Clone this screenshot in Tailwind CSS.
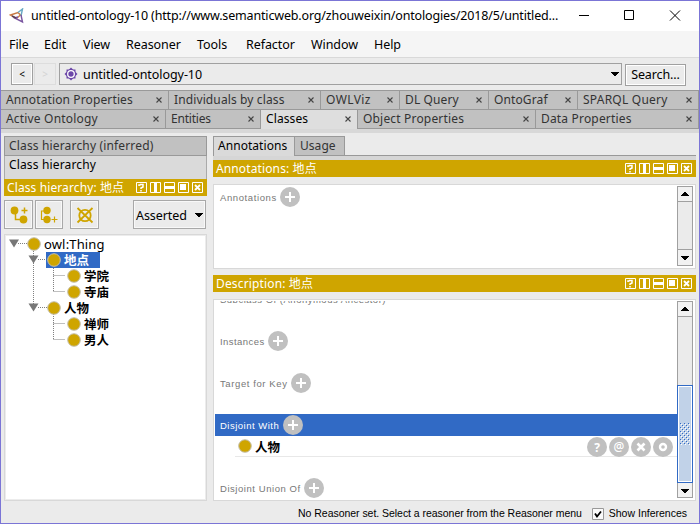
<!DOCTYPE html>
<html lang="zh">
<head>
<meta charset="utf-8">
<title>untitled-ontology-10</title>
<script src="https://cdn.jsdelivr.net/npm/@tailwindcss/browser@4"></script>
</head>
<body class="w-[700px] h-[524px] overflow-hidden font-['Noto_Sans','Noto_Sans_CJK_SC',sans-serif] text-[12px] leading-none text-black">
<svg class="hidden">
  <symbol id="panel" viewBox="0 0 67 11">
    <g fill="none" stroke="#fff" stroke-width="1"><path d="M.5 .5h10v10h-10zM14.500 .5h10v10h-10zM28.500 .5h10v10h-10zM42.500 .5h10v10h-10zM56.500 .5h10v10h-10z"/></g>
    <path d="M18 1h3v9h-3zM29 4h9v3h-9zM44 2h6v6h-6z" fill="#fff"/>
    <path d="M3 4V3h1.500M4 2.500h3V5L5 6v1M5 8v1.500" fill="none" stroke="#fff" stroke-width="1.500"/>
    <path d="M59 3l5 5M64 3l-5 5" stroke="#fff" stroke-width="1.800"/>
  </symbol>
  <symbol id="plus" viewBox="0 0 20 20"><circle cx="10" cy="10" r="10" fill="#c0c0c0"/><path d="M10 5v10M5 10h10" stroke="#fff" stroke-width="2"/></symbol>
  <symbol id="dot" viewBox="0 0 14 14"><circle cx="7" cy="7" r="6.300" fill="#cfa500" stroke="#c4bfae"/></symbol>
  <symbol id="up" viewBox="0 0 8 4"><path d="M0 4V3h1V2h1V1h1V0h2v1h1v1h1v1h1v1z"/></symbol>
  <symbol id="down" viewBox="0 0 8 4"><path d="M0 0v1h1v1h1v1h1v1h2V3h1V2h1V1h1V0z"/></symbol>
  <symbol id="x" viewBox="0 0 6 6"><path d="M.5 .5l5 5M5.500 .5l-5 5" stroke="#444" stroke-width="1.100"/></symbol>
</svg>
<div class="w-[700px] h-[524px] border border-[#7b75d6] bg-[#ebebeb] flex flex-col">
  <header class="h-[30px] bg-white flex items-center shrink-0">
    <svg class="w-[16px] h-[16px] ml-[8px] mr-[6px]" viewBox="0 0 16 16" fill="none" stroke-width="1.400"><path d="M1.500 7L9 4.500L11.500 7L7.500 10.500z" stroke="#c77a45"/><path d="M9 4.500L13.500 1L12 8" stroke="#68a9c4"/><path d="M12 7L13.500 14L5.500 10L9 9" stroke="#7955a0"/><path d="M3 8l4 2" stroke="#5a4058"/></svg>
    <div class="w-[529px] text-[12.500px] whitespace-nowrap tracking-[-0.160px]">untitled-ontology-10 (http://www.semanticweb.org/zhouweixin/ontologies/2018/5/untitled...</div>
    <svg class="w-[102px] h-[12px] ml-[19px]" viewBox="0 0 102 12" fill="none" stroke="#000"><path d="M0 5.500h10M45.500 .5h9v9h-9zM91 .5l10 10M101 .5l-10 10"/></svg>
  </header>
  <nav class="h-[27px] bg-[#f5f5f5] border-b border-[#d9d9d9] flex items-center shrink-0 pl-[8px] pt-[2px] text-[12.500px] tracking-[-0.070px]">
    <span class="w-[35px]">File</span><span class="w-[39px]">Edit</span><span class="w-[43px]">View</span><span class="w-[71px]">Reasoner</span><span class="w-[49px]">Tools</span><span class="w-[65px]">Refactor</span><span class="w-[63px]">Window</span><span>Help</span>
  </nav>
  <div class="h-[32px] shrink-0 flex items-start pl-[10px] pt-[5px]">
    <button class="w-[22px] h-[22px] border border-[#a0a0a0] outline outline-white -outline-offset-2 text-[10px]">&lt;</button>
    <button class="w-[22px] h-[22px] border border-[#ddd] ml-[1px] text-[10px] text-[#d4d4d4]">&gt;</button>
    <div class="w-[563px] h-[22px] border border-[#a0a0a0] ml-[3px] flex items-center pl-[4px] pr-[2px]">
      <svg class="w-[14px] h-[14px]" viewBox="0 0 14 14"><path d="M7 .5L13.500 7 7 13.500 .5 7z" fill="#6c47a8"/><path d="M2.500 2.500h9v9h-9z" fill="#6c47a8"/><circle cx="7" cy="7" r="3.300" fill="none" stroke="#fff" stroke-width="1.300"/></svg>
      <span class="ml-[5px] mt-[2px] text-[12.500px] tracking-[-0.060px]">untitled-ontology-10</span>
      <svg class="w-[8px] h-[4px] ml-auto"><use href="#down"/></svg>
    </div>
    <button class="w-[61px] h-[22px] mt-[1px] border border-[#a0a0a0] outline outline-white -outline-offset-2 ml-[3px] text-[12.500px] tracking-[-0.100px]">Search...</button>
  </div>
  <div class="h-[19px] shrink-0 flex border-t border-[#999] bg-[#c1c1c1] text-[#333] tracking-[0.120px]">
    <div class="w-[168px] border-r border-[#999] flex items-center justify-between pl-[5px] pr-[6px]"><span>Annotation Properties</span><svg class="w-[6px] h-[6px]"><use href="#x"/></svg></div>
    <div class="w-[152px] border-r border-[#999] flex items-center justify-between pl-[5px] pr-[6px]"><span>Individuals by class</span><svg class="w-[6px] h-[6px]"><use href="#x"/></svg></div>
    <div class="w-[79px] border-r border-[#999] flex items-center justify-between pl-[5px] pr-[6px]"><span class="tracking-[0.400px]">OWLViz</span><svg class="w-[6px] h-[6px]"><use href="#x"/></svg></div>
    <div class="w-[89px] border-r border-[#999] flex items-center justify-between pl-[5px] pr-[6px]"><span>DL Query</span><svg class="w-[6px] h-[6px]"><use href="#x"/></svg></div>
    <div class="w-[89px] border-r border-[#999] flex items-center justify-between pl-[5px] pr-[6px]"><span>OntoGraf</span><svg class="w-[6px] h-[6px]"><use href="#x"/></svg></div>
    <div class="w-[121px] border-r border-[#999] flex items-center justify-between pl-[5px] pr-[6px]"><span class="tracking-[0.240px]">SPARQL Query</span><svg class="w-[6px] h-[6px]"><use href="#x"/></svg></div>
  </div>
  <div class="h-[24px] shrink-0 flex items-start bg-[#d8d8d8] text-[#333] tracking-[0.180px]">
    <div class="w-[165px] h-[20px] border-y border-r border-[#999] bg-[#c1c1c1] flex items-center justify-between pl-[5px] pr-[6px]"><span>Active Ontology</span><svg class="w-[6px] h-[6px]"><use href="#x"/></svg></div>
    <div class="w-[95px] h-[20px] border-y border-r border-[#999] bg-[#c1c1c1] flex items-center justify-between pl-[5px] pr-[6px]"><span class="tracking-[-0.200px]">Entities</span><svg class="w-[6px] h-[6px]"><use href="#x"/></svg></div>
    <div class="w-[97px] h-[20px] border-t border-r border-[#999] bg-[#dedede] text-black flex items-center justify-between pl-[5px] pr-[6px]"><span class="-mt-[2px] tracking-[0.100px]">Classes</span><svg class="w-[6px] h-[6px] -mt-px"><use href="#x"/></svg></div>
    <div class="w-[178px] h-[20px] border-y border-r border-[#999] bg-[#c1c1c1] flex items-center justify-between pl-[5px] pr-[6px]"><span>Object Properties</span><svg class="w-[6px] h-[6px]"><use href="#x"/></svg></div>
    <div class="w-[163px] h-[20px] border-y border-r border-[#999] bg-[#c1c1c1] flex items-center justify-between pl-[5px] pr-[6px]"><span>Data Properties</span><svg class="w-[6px] h-[6px]"><use href="#x"/></svg></div>
  </div>
  <main class="flex-1 min-h-0 flex pl-[3px] pt-[3px] gap-[6px]">
    <section class="w-[203px] flex flex-col">
      <div class="h-[20px] border border-[#999] bg-[#c1c1c1] text-[#333] tracking-[0.160px] flex items-center pl-[4px]">Class hierarchy (inferred)</div>
      <div class="h-[23px] bg-[#dadada] border-x border-[#aaa] tracking-[0.150px] pl-[4px] pt-[3px]">Class hierarchy</div>
      <div class="h-[17px] bg-[#cfa500] text-white flex items-center pl-[3px] pr-[4px] justify-between"><span class="tracking-[0.110px]">Class hierarchy: 地点</span><svg class="w-[67px] h-[11px]"><use href="#panel"/></svg></div>
      <div class="flex mt-[4px] h-[29px]">
        <button class="w-[29px] border border-[#a8a8a8] outline outline-[#f8f8f8] -outline-offset-2 flex items-center justify-center"><svg class="w-[18px] h-[18px]" viewBox="0 0 18 18"><g fill="#cfa500"><circle cx="4.500" cy="4.500" r="3.900"/><circle cx="13.500" cy="13.500" r="3.900"/></g><path d="M5.500 8v5.500H10M14.500 1.500v6M11.500 4.500h6" fill="none" stroke="#cfa500" stroke-width="1.500"/></svg></button>
        <button class="w-[28px] border border-[#a8a8a8] outline outline-[#f8f8f8] -outline-offset-2 ml-[2px] flex items-center justify-center"><svg class="w-[18px] h-[18px]" viewBox="0 0 18 18"><g fill="#cfa500"><circle cx="7" cy="4.500" r="3.700"/><circle cx="7" cy="13.500" r="3.700"/></g><path d="M4 5H1.500v8.500H4M14.500 10.500v6M11.500 13.500h6" fill="none" stroke="#cfa500" stroke-width="1.200"/></svg></button>
        <button class="w-[29px] border border-[#a8a8a8] outline outline-[#f8f8f8] -outline-offset-2 ml-[7px] flex items-center justify-center"><svg class="w-[18px] h-[18px]" viewBox="0 0 18 18" fill="none" stroke="#cfa500" stroke-width="1.800"><circle cx="9" cy="9.500" r="5.700"/><path d="M1.500 2l15 14.500M16.500 2l-15 14.500"/></svg></button>
        <button class="w-[73px] border border-[#a8a8a8] outline outline-[#f8f8f8] -outline-offset-2 ml-auto mr-[1px] flex items-center justify-between pl-[2px] pr-[2px] text-[12.500px]"><span class="mt-[3px] tracking-[-0.080px]">Asserted</span><svg class="w-[8px] h-[4px]"><use href="#down"/></svg></button>
      </div>
      <div class="mt-[5px] h-[267px] bg-white border border-[#d8d8d8] outline outline-[#ececec] -outline-offset-2 relative pt-[1px]">
        <svg class="absolute left-0 top-0 w-[80px] h-[120px]" viewBox="0 0 80 120"><g fill="none" stroke="#808080" stroke-dasharray="1 1"><path d="M13 8.500h9M33 24.500h9M33 72.500h9M28.500 16v57M48.500 31v26M48.500 40.500h12M48.500 56.500h12M48.500 79v26M48.500 88.500h12M48.500 104.500h12"/></g><g fill="#777"><path d="M4 4.500h10l-5 8zM23.500 20.500h10l-5 8zM23.500 68.500h10l-5 8z"/></g></svg>
        <div class="relative font-bold">
          <div class="h-[16px] flex items-center pl-[22px] font-normal text-[13px] tracking-[0.150px]"><svg class="w-[14px] h-[14px] mr-[3px]"><use href="#dot"/></svg>owl:Thing</div>
          <div class="h-[16px] flex items-center ml-[41px] w-[54px] pl-[1px] bg-[#316ac5] text-white"><svg class="w-[14px] h-[14px] mr-[3px]"><use href="#dot"/></svg><span class="mt-[2px] text-[12.500px]">地点</span></div>
          <div class="h-[16px] flex items-center pl-[62px]"><svg class="w-[14px] h-[14px] mr-[3px]"><use href="#dot"/></svg><span class="mt-[2px] text-[12.500px]">学院</span></div>
          <div class="h-[16px] flex items-center pl-[62px]"><svg class="w-[14px] h-[14px] mr-[3px]"><use href="#dot"/></svg><span class="mt-[2px] text-[12.500px]">寺庙</span></div>
          <div class="h-[16px] flex items-center pl-[42px]"><svg class="w-[14px] h-[14px] mr-[3px]"><use href="#dot"/></svg><span class="mt-[2px] text-[12.500px]">人物</span></div>
          <div class="h-[16px] flex items-center pl-[62px]"><svg class="w-[14px] h-[14px] mr-[3px]"><use href="#dot"/></svg><span class="mt-[2px] text-[12.500px]">禅师</span></div>
          <div class="h-[16px] flex items-center pl-[62px]"><svg class="w-[14px] h-[14px] mr-[3px]"><use href="#dot"/></svg><span class="mt-[2px] text-[12.500px]">男人</span></div>
        </div>
      </div>
    </section>
    <section class="w-[483px] flex flex-col">
      <div class="h-[20px] shrink-0 flex tracking-[0.050px]">
        <div class="w-[81px] border-t border-l border-[#999] bg-[#dadada] flex items-center pl-[4px]"><span class="-mt-px">Annotations</span></div>
        <div class="w-[51px] border border-[#999] bg-[#c1c1c1] text-[#333] flex items-center pl-[5px]">Usage</div>
        <div class="flex-1 border-b border-[#999]"></div>
      </div>
      <div class="h-[4px] shrink-0 bg-[#d6d6d6]"></div>
      <div class="h-[17px] shrink-0 bg-[#cfa500] text-white flex items-center pl-[3px] pr-[4px] justify-between"><span class="tracking-[0.120px]">Annotations: 地点</span><svg class="w-[67px] h-[11px]"><use href="#panel"/></svg></div>
      <div class="mt-[7px] h-[85px] shrink-0 bg-white border border-[#d8d8d8] flex justify-between font-['Liberation_Sans',sans-serif] text-[9.500px] tracking-[0.600px] text-[#777]">
        <div class="flex items-center h-[22px] mt-[1px] pl-[6px]"><span class="mt-[2px]">Annotations</span><svg class="w-[20px] h-[20px] ml-[3px]"><use href="#plus"/></svg></div>
        <div class="w-[16px] h-[80px] mt-[1px] mr-[2px] border border-[#a0a0a0] bg-[#ebebeb] flex flex-col justify-between">
          <div class="h-[15px] border-b border-[#a0a0a0] bg-[#f2f2f2] flex items-center justify-center"><svg class="w-[8px] h-[4px]"><use href="#up"/></svg></div>
          <div class="h-[16px] border-t border-[#a0a0a0] bg-[#f2f2f2] flex items-center justify-center"><svg class="w-[8px] h-[4px]"><use href="#down"/></svg></div>
        </div>
      </div>
      <div class="mt-[6px] h-[17px] shrink-0 bg-[#cfa500] text-white flex items-center pl-[3px] pr-[4px] justify-between"><span class="tracking-[0.150px]">Description: 地点</span><svg class="w-[67px] h-[11px]"><use href="#panel"/></svg></div>
      <div class="mt-[7px] h-[202px] shrink-0 bg-white border border-[#d8d8d8] flex pl-[1px] pt-[1px] font-['Liberation_Sans',sans-serif] text-[9.500px] tracking-[0.550px] text-[#777]">
        <div class="w-[462px] h-[199px] overflow-hidden flex flex-col">
          <div class="h-[22px] shrink-0 -mt-[13px] flex items-center pl-[5px] pt-[2px] tracking-[0.500px]">Subclass Of (Anonymous Ancestor)</div>
          <div class="h-[22px] shrink-0 mt-[20px] flex items-center pl-[5px]"><span class="mt-[2px] tracking-[0.450px]">Instances</span><svg class="w-[20px] h-[20px] ml-[3px]"><use href="#plus"/></svg></div>
          <div class="h-[22px] shrink-0 mt-[20px] flex items-center pl-[5px]"><span class="mt-[2px] tracking-[0.600px]">Target for Key</span><svg class="w-[20px] h-[20px] ml-[3px]"><use href="#plus"/></svg></div>
          <div class="h-[22px] shrink-0 mt-[20px] flex items-center pl-[5px] bg-[#316ac5] text-white"><span class="mt-[2px] tracking-[0.500px]">Disjoint With</span><svg class="w-[20px] h-[20px] ml-[4px]"><use href="#plus"/></svg></div>
          <div class="h-[21px] shrink-0 ml-[20px] border-b border-[#e8e8e8] flex items-center pl-[3px] font-['Noto_Sans_CJK_SC',sans-serif] text-[12.500px] tracking-normal font-bold text-black"><svg class="w-[14px] h-[14px] mr-[3px]"><use href="#dot"/></svg><span class="mt-[2px]">人物</span>
            <svg class="w-[86px] h-[20px] mt-[2px] ml-auto mr-[4px]" viewBox="0 0 86 20"><g fill="#c0c0c0"><circle cx="10" cy="10" r="10"/><circle cx="32" cy="10" r="10"/><circle cx="54" cy="10" r="10"/><circle cx="76" cy="10" r="10"/></g><g fill="#fff" text-anchor="middle" font-family="Noto Sans"><text x="10" y="15" font-size="12" font-weight="700">?</text><text x="32" y="13.500" font-size="12" font-weight="500">@</text></g><path d="M50.500 6.500l7 7M57.500 6.500l-7 7" stroke="#fff" stroke-width="2.600"/><circle cx="76" cy="10" r="3" fill="none" stroke="#fff" stroke-width="2.400"/></svg>
          </div>
          <div class="h-[22px] shrink-0 mt-[20px] flex items-center pl-[5px]"><span class="mt-[2px]">Disjoint Union Of</span><svg class="w-[20px] h-[20px] ml-[3px]"><use href="#plus"/></svg></div>
        </div>
        <div class="w-[16px] h-[197px] bg-[#ebebeb] border border-[#a0a0a0] flex flex-col">
          <div class="h-[15px] shrink-0 border-b border-[#a0a0a0] bg-[#f2f2f2] flex items-center justify-center"><svg class="w-[8px] h-[4px]"><use href="#up"/></svg></div>
          <div class="mt-[68px] -mx-px h-[98px] shrink-0 border border-[#316ac5] bg-[#c1d2e8] outline outline-white -outline-offset-2 flex items-center justify-center">
            <svg class="w-[10px] h-[22px]"><defs><pattern id="grip" width="4" height="4" patternUnits="userSpaceOnUse"><path d="M0 0h1v1H0zM2 2h1v1H2z" fill="#316ac5"/><path d="M1 1h1v1H1zM3 3h1v1H3z" fill="#fff"/></pattern></defs><path d="M0 0h10v22H0z" fill="url(#grip)"/></svg>
          </div>
          <div class="flex-1 bg-[#f2f2f2] flex items-center justify-center pt-[1px]"><svg class="w-[8px] h-[4px]"><use href="#down"/></svg></div>
        </div>
      </div>
      <footer class="flex-1 flex items-center justify-end pr-[9px] pt-[3px] font-['Liberation_Sans',sans-serif] text-[10.500px]">
        <span class="tracking-[-0.040px]">No Reasoner set. Select a reasoner from the Reasoner menu</span>
        <svg class="w-[12px] h-[12px] ml-[10px] mr-[5px]" viewBox="0 0 12 12"><path d="M.5 .5h11v11H.5z" fill="#fafafa" stroke="#999"/><path d="M3 5.500l2 3 4-5" fill="none" stroke="#000" stroke-width="1.800"/></svg>
        <span>Show Inferences</span>
      </footer>
    </section>
  </main>
</div>
</body>
</html>
